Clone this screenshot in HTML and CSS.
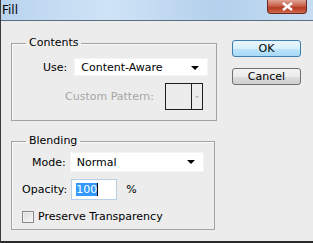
FILE: index.html
```html
<!DOCTYPE html>
<html lang="en">
<head>
    <meta charset="UTF-8">
    <title>Fill</title>
    <link rel="stylesheet" href="styles.css">
</head>
<body>
    <div class="window">
        <div class="title-bar">
            <span class="title">Fill</span>
            <button class="close-button">
                <svg width="13" height="9" viewBox="0 0 13 9">
                    <path d="M2 1 L11 8 M11 1 L2 8" stroke="#fff" stroke-width="2.4"/>
                </svg>
            </button>
        </div>

        <div class="dialog">
            <div class="groups">
                <fieldset class="group contents">
                    <legend>Contents</legend>
                    <div class="row">
                        <label class="field-label use-label">Use:</label>
                        <div class="select wide">Content-Aware<span class="caret"></span></div>
                    </div>
                    <div class="row pattern-row">
                        <label class="field-label disabled">Custom Pattern:</label>
                        <div class="swatch">
                            <div class="swatch-box"></div>
                            <div class="swatch-arrow"><span class="caret small"></span></div>
                        </div>
                    </div>
                </fieldset>

                <fieldset class="group blending">
                    <legend>Blending</legend>
                    <div class="row">
                        <label class="field-label mode-label">Mode:</label>
                        <div class="select wide tall">Normal<span class="caret"></span></div>
                    </div>
                    <div class="row opacity-row">
                        <label class="field-label">Opacity:</label>
                        <div class="text-input"><span class="selected">100</span><span class="cursor"></span></div>
                        <span class="unit">%</span>
                    </div>
                    <div class="row check-row">
                        <span class="checkbox"></span>
                        <label class="field-label">Preserve Transparency</label>
                    </div>
                </fieldset>
            </div>

            <div class="buttons">
                <button class="dlg-button default">OK</button>
                <button class="dlg-button">Cancel</button>
            </div>
        </div>
    </div>
</body>
</html>
```

FILE: styles.css
```css
* {
    margin: 0;
    padding: 0;
    box-sizing: border-box;
}

body {
    width: 313px;
    height: 243px;
    overflow: hidden;
    font-family: 'DejaVu Sans', sans-serif;
    font-size: 11px;
    color: #000;
    background: #ececec;
}

.window {
    height: 243px;
    display: flex;
    flex-direction: column;
    border-left: 1px solid #3c3c3c;
    border-bottom: 2px solid #2a2a2a;
}

.title-bar {
    height: 21px;
    flex-shrink: 0;
    display: flex;
    align-items: flex-start;
    justify-content: space-between;
    background: linear-gradient(90deg, #b9d4ee 0%, #cfe3f6 35%, #b3d0ec 70%, #c6ddf2 100%);
    border-bottom: 1px solid #5e6f82;
}

.title {
    font-family: 'DejaVu Sans', sans-serif;
    font-size: 12px;
    padding: 3px 0 0 1px;
}

.close-button {
    width: 40px;
    height: 14px;
    margin-right: 6px;
    border: 1px solid #6d2a22;
    border-top: none;
    border-radius: 0 0 4px 4px;
    background: linear-gradient(180deg, #e0a394 0%, #c9604b 45%, #b53a22 60%, #cf6b4d 100%);
    display: flex;
    align-items: center;
    justify-content: center;
}

.dialog {
    flex: 1;
    display: flex;
    padding: 17px 0 0 10px;
    background: #ececec;
}

.groups {
    width: 204px;
    display: flex;
    flex-direction: column;
    gap: 15px;
}

.group {
    border: 1px solid #a3a3a3;
    box-shadow: inset 1px 1px 0 #fafafa;
    padding: 0 8px 0 0;
}

.group legend {
    margin-left: 14px;
    padding: 0 3px;
    line-height: 10px;
}

.contents {
    height: 83px;
}

.blending {
    height: 94px;
}

.row {
    display: flex;
    align-items: center;
}

.field-label {
    white-space: nowrap;
}

.disabled {
    color: #a6a6a6;
}

.use-label {
    margin: 10px 7px 0 31px;
}

.contents .row:first-of-type {
    margin-top: 0;
}

.contents .select {
    margin-top: 10px;
}

.select {
    position: relative;
    height: 18px;
    background: #fff;
    padding: 2px 0 0 6px;
    border: 1px solid #f4f4f4;
}

.select.wide {
    width: 134px;
}

.select.tall {
    height: 20px;
    padding-top: 3px;
}

.caret {
    position: absolute;
    right: 8px;
    top: 7px;
    width: 0;
    height: 0;
    border-left: 4px solid transparent;
    border-right: 4px solid transparent;
    border-top: 4px solid #000;
}

.caret.small {
    position: static;
    border-left-width: 2px;
    border-right-width: 2px;
    border-top: 2px solid #b0b0b0;
}

.pattern-row {
    margin-top: 7px;
    padding-left: 53px;
}

.pattern-row .field-label {
    margin-right: 11px;
}

.swatch {
    display: flex;
    width: 38px;
    height: 27px;
    border: 1px solid #1e1e1e;
}

.swatch-box {
    flex: 1;
    border-right: 1px solid #1e1e1e;
    background: #ececec;
}

.swatch-arrow {
    width: 10px;
    display: flex;
    align-items: center;
    justify-content: center;
    background: #ececec;
}

.blending .row:first-of-type {
    margin-top: 6px;
}

.mode-label {
    margin: 0 4px 0 20px;
}

.opacity-row {
    margin-top: 7px;
    padding-left: 10px;
}

.opacity-row .field-label {
    margin-right: 4px;
}

.text-input {
    width: 46px;
    height: 21px;
    background: #fff;
    border: 1px solid #b8cfe6;
    padding: 3px 0 0 4px;
    display: flex;
    align-items: flex-start;
}

.selected {
    background: #3399ff;
    color: #fff;
    line-height: 13px;
}

.cursor {
    width: 1px;
    height: 13px;
    background: #000;
}

.unit {
    margin-left: 9px;
}

.check-row {
    margin-top: 10px;
    padding-left: 10px;
    gap: 4px;
}

.checkbox {
    width: 12px;
    height: 12px;
    border: 1px solid #8a8a8a;
    background: linear-gradient(135deg, #dcdcdc, #f8f8f8);
    box-shadow: inset 0 0 0 1px #f0f0f0;
}

.buttons {
    display: flex;
    flex-direction: column;
    gap: 11px;
    padding: 2px 0 0 17px;
}

.dlg-button {
    width: 69px;
    height: 17px;
    font-family: 'DejaVu Sans', sans-serif;
    font-size: 11px;
    border: 1px solid #707070;
    border-radius: 3px;
    background: linear-gradient(180deg, #f2f2f2 0%, #ebebeb 50%, #dddddd 51%, #cfcfcf 100%);
    color: #000;
}

.dlg-button.default {
    border-color: #3c7fb1;
    background: linear-gradient(180deg, #eaf6fd 0%, #d9f0fc 50%, #bee6fd 51%, #a7d9f5 100%);
}
```
